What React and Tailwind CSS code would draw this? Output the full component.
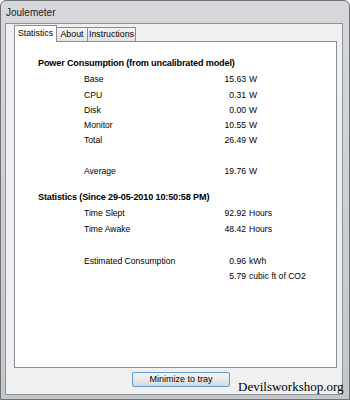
import React from "react";

const font = { fontFamily: '"Liberation Sans", Arial, sans-serif' };

const Row = ({ label, value, unit, h }) => (
    <div className={`flex items-center ${h} text-[8.6px] text-black`}>
        <span className="w-[120px]">{label}</span>
        <span className="w-[42px] text-right">{value}</span>
        <span className="ml-[3px]">{unit}</span>
    </div>
);

const App = () => {
    const power = [
        ["Base", "15.63", "W"],
        ["CPU", "0.31", "W"],
        ["Disk", "0.00", "W"],
        ["Monitor", "10.55", "W"],
        ["Total", "26.49", "W"],
    ];

    return (
        <div style={font} className="relative w-[350px] h-[400px] bg-white">
            <div className="flex flex-col w-[350px] h-[400px] rounded-t-[6px] border border-[#6f7378] bg-gradient-to-b from-[#d6d8db] via-[#cdd0d3] to-[#c4c7ca]">
                {/* title bar */}
                <div className="flex items-center h-[22px] pl-[5px] text-[10px] text-[#1b1b1b]">Joulemeter</div>

                <div className="flex flex-1 pl-[4px] pr-[6px] pb-[4px]">
                    <div className="flex flex-col flex-1 border border-[#8f9398] bg-[#f0f0f0] pl-[8px] pr-[5px]">
                        {/* tabs */}
                        <div className="flex items-end h-[17px] text-[8.8px] text-black">
                            <div className="relative z-10 flex items-center justify-center w-[43px] h-[17px] -mb-px border border-b-0 border-[#898c95] bg-white">Statistics</div>
                            <div className="flex items-center justify-center w-[31px] h-[14px] border border-l-0 border-b-0 border-[#898c95] bg-gradient-to-b from-[#f3f3f3] to-[#e3e3e3]">About</div>
                            <div className="flex items-center justify-center w-[48px] h-[14px] border border-l-0 border-b-0 border-[#898c95] bg-gradient-to-b from-[#f3f3f3] to-[#e3e3e3]">Instructions</div>
                        </div>

                        {/* panel */}
                        <div className="h-[327px] border border-[#898c95] bg-white pl-[23px] pt-[15px]">
                            <div className="h-[12px] leading-[12px] text-[9.1px] font-bold text-black tracking-[-0.15px]">Power Consumption (from uncalibrated model)</div>
                            <div className="ml-[46px] mt-[3px]">
                                {power.map(([l, v, u]) => (
                                    <Row key={l} label={l} value={v} unit={u} h="h-[15.3px]" />
                                ))}
                                <div className="h-[15.3px]" />
                                <Row label="Average" value="19.76" unit="W" h="h-[15.3px]" />
                            </div>

                            <div className="mt-[12px] h-[12px] leading-[12px] text-[9.1px] font-bold text-black tracking-[-0.15px]">Statistics (Since 29-05-2010 10:50:58 PM)</div>
                            <div className="ml-[46px] mt-[3px]">
                                <Row label="Time Slept" value="92.92" unit="Hours" h="h-[15.7px]" />
                                <Row label="Time Awake" value="48.42" unit="Hours" h="h-[15.7px]" />
                                <div className="h-[15.7px]" />
                                <Row label="Estimated Consumption" value="0.96" unit="kWh" h="h-[15.7px]" />
                                <Row label="" value="5.79" unit="cubic ft of CO2" h="h-[15.7px]" />
                            </div>
                        </div>

                        {/* button row */}
                        <div className="flex mt-[4px]">
                            <button className="ml-[118px] w-[98px] h-[15px] rounded-[2px] border border-[#5d9bd0] bg-gradient-to-b from-[#f4f4f4] via-[#e9e9e9] to-[#d7d7d7] text-[9px] leading-[13px] text-black">
                                Minimize to tray
                            </button>
                        </div>
                    </div>
                </div>
            </div>

            <div
                className="absolute left-[238px] top-[379px] text-[13px] leading-[16px] text-black"
                style={{ fontFamily: '"Liberation Serif", "Times New Roman", serif' }}
            >
                Devilsworkshop.org
            </div>
        </div>
    );
};

export default App;
